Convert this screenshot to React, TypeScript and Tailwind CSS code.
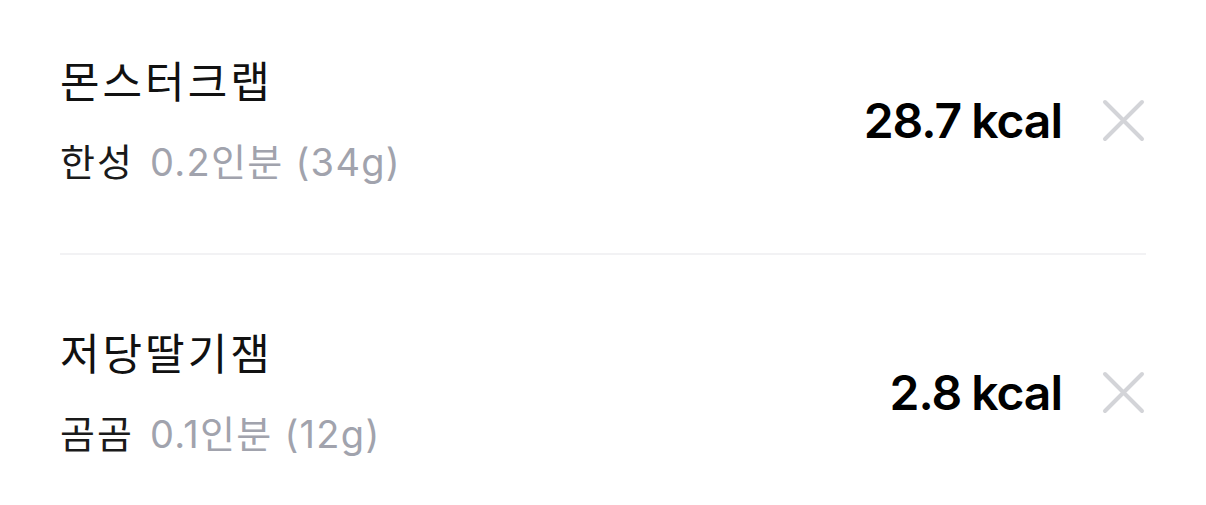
import React from "react";

const items = [
  { name: "몬스터크랩", brand: "한성", amount: "0.2인분 (34g)", kcal: "28.7" },
  { name: "저당딸기잼", brand: "곰곰", amount: "0.1인분 (12g)", kcal: "2.8" },
];

function CloseIcon() {
  return (
    <svg width="44" height="44" viewBox="0 0 44 44" fill="none" className="shrink-0">
      <path d="M3 3L40 40M40 3L3 40" stroke="#d3d4d8" strokeWidth="4" strokeLinecap="round" />
    </svg>
  );
}

function Row({ item, className }: { item: (typeof items)[number]; className: string }) {
  return (
    <div className={`flex items-center justify-between ${className}`}>
      <div className="flex flex-col gap-[34px]">
        <div className="text-[43px] leading-[48px] font-normal text-[#111111] tracking-[3px]">{item.name}</div>
        <div className="text-[38px] leading-[44px] flex gap-[16px]">
          <span className="text-[#1a1a1a] tracking-[2px]">{item.brand}</span>
          <span className="text-[#a1a3ad] tracking-[1.3px]">{item.amount}</span>
        </div>
      </div>
      <div className="flex items-center gap-[40px]">
        <div className="text-[48px] leading-[52px] font-semibold text-black tracking-[-1px] flex gap-[10px]">
          <span>{item.kcal}</span>
          <span>kcal</span>
        </div>
        <CloseIcon />
      </div>
    </div>
  );
}

export default function App() {
  return (
    <div
      className="w-[1206px] h-[505px] overflow-hidden bg-white px-[60px]"
      style={{ fontFamily: 'Inter, "Noto Sans CJK KR", sans-serif' }}
    >
      <Row item={items[0]} className="h-[253px] pb-[12px]" />
      <div className="h-[2px] bg-[#f2f2f4]" />
      <Row item={items[1]} className="h-[276px]" />
    </div>
  );
}
